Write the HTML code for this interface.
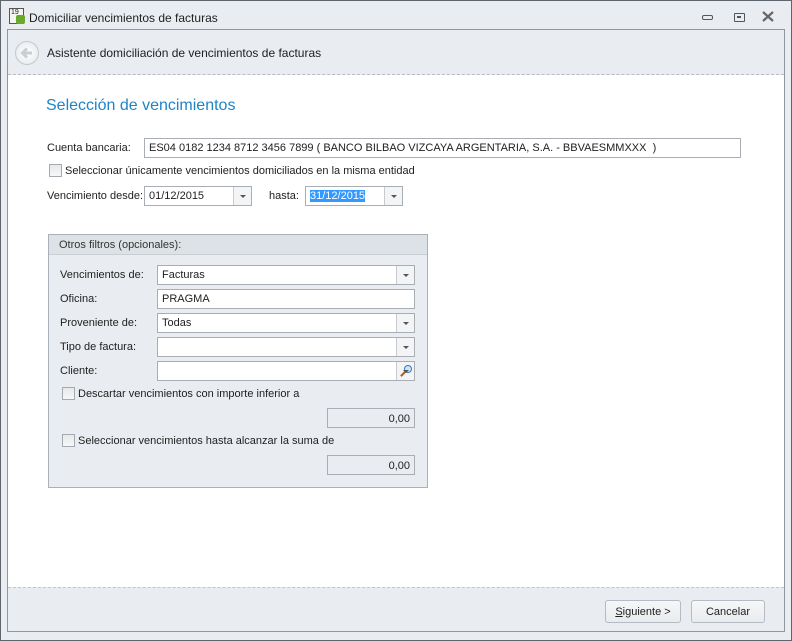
<!DOCTYPE html>
<html><head><meta charset="utf-8"><style>
*{box-sizing:border-box;margin:0;padding:0}
body{width:792px;height:641px;position:relative;background:#e9edf1;font-family:"Liberation Sans",sans-serif;font-size:11px;color:#1e1e1e;overflow:hidden}
.a{position:absolute}
.win{left:0;top:0;width:792px;height:641px;border:1px solid #5e656d;background:#e9edf1}
.frame{left:7px;top:29px;width:778px;height:603px;border:1px solid #8e969e;background:#fff}
.hdr{left:0;top:0;width:776px;height:45px;background:#e9edf1;border-bottom:1px dashed #b5bcc4}
.ftr{left:0;top:557px;width:776px;height:44px;background:#e9edf1;border-top:1px dashed #c0c6cc}
.inp{background:#fff;border:1px solid #a9aeb4;height:20px;padding:3px 0 0 4px;white-space:nowrap;overflow:hidden}
.dd{position:absolute;right:0;top:0;width:18px;height:18px;border-left:1px solid #c8ccd0;background:#f3f4f6}
.dd:after{content:"";position:absolute;left:6px;top:8px;border-left:3px solid transparent;border-right:3px solid transparent;border-top:3px solid #555}
.cb{width:13px;height:13px;border:1px solid #a5aab0;background:linear-gradient(#e6e8ea,#f6f7f8)}
.ro{background:#e9edf1;border:1px solid #a9aeb4;height:20px;text-align:right;padding:4px 4px 0 0}
.btn{height:23px;border:1px solid #b5bbc2;border-radius:3px;background:linear-gradient(#f6f7f8,#e8ebee);text-align:center;padding-top:5px}
</style></head><body>
<div class="a win"></div>
<div class="a" style="left:9px;top:8px;width:15px;height:16px;border:1px solid #555;background:#f4f4f0;font-size:7px;line-height:7px;padding-left:1px">19</div>
<div class="a" style="left:16px;top:15px;width:9px;height:9px;background:#6aa82e;border-radius:2px"></div>
<div class="a" style="left:29px;top:11px;font-size:12px">Domiciliar vencimientos de facturas</div>
<div class="a" style="left:702px;top:15px;width:11px;height:5px;border:1.5px solid #555;border-radius:2px"></div>
<div class="a" style="left:734px;top:13px;width:11px;height:9px;border:1.5px solid #555;border-radius:1px"><div style="margin:2px 0 0 2px;width:4px;height:2px;border:1px solid #555"></div></div>
<svg class="a" style="left:762px;top:11px" width="12" height="11"><path d="M1 1L11 10M11 1L1 10" stroke="#666" stroke-width="2.2" fill="none"/></svg>
<div class="a frame">
 <div class="a hdr">
  <div class="a" style="left:7px;top:11px;width:24px;height:24px;border-radius:50%;border:1px solid #c3c8ce;background:radial-gradient(#fff,#e2e6ea)"></div>
  <svg class="a" style="left:12px;top:16px" width="14" height="14"><path d="M12 7H3M7 2.5L2.5 7L7 11.5" stroke="#c9ced4" stroke-width="3" fill="none"/></svg>
  <div class="a" style="left:39px;top:16px;font-size:12px">Asistente domiciliación de vencimientos de facturas</div>
 </div>
 <div class="a" style="left:38px;top:67px;font-size:16px;color:#1e84c6">Selección de vencimientos</div>
 <div class="a" style="left:39px;top:112px">Cuenta bancaria:</div>
 <div class="a inp" style="left:136px;top:108px;width:597px">ES04 0182 1234 8712 3456 7899 ( BANCO BILBAO VIZCAYA ARGENTARIA, S.A. - BBVAESMMXXX &nbsp;)</div>
 <div class="a cb" style="left:41px;top:134px"></div>
 <div class="a" style="left:57px;top:135px">Seleccionar únicamente vencimientos domiciliados en la misma entidad</div>
 <div class="a" style="left:39px;top:160px">Vencimiento desde:</div>
 <div class="a inp" style="left:136px;top:156px;width:108px">01/12/2015<div class="dd"></div></div>
 <div class="a" style="left:261px;top:160px">hasta:</div>
 <div class="a inp" style="left:297px;top:156px;width:98px"><span style="background:#3399ff;color:#fff">31/12/2015</span><div class="dd"></div></div>
 <div class="a" style="left:40px;top:204px;width:380px;height:254px;border:1px solid #a9b0b8;background:#e9edf1">
  <div style="height:20px;background:#dde2e7;border-bottom:1px solid #c8ced4;padding:4px 0 0 10px;color:#333">Otros filtros (opcionales):</div>
  <div class="a" style="left:11px;top:34px">Vencimientos de:</div>
  <div class="a inp" style="left:108px;top:30px;width:258px">Facturas<div class="dd"></div></div>
  <div class="a" style="left:11px;top:58px">Oficina:</div>
  <div class="a inp" style="left:108px;top:54px;width:258px">PRAGMA</div>
  <div class="a" style="left:11px;top:82px">Proveniente de:</div>
  <div class="a inp" style="left:108px;top:78px;width:258px">Todas<div class="dd"></div></div>
  <div class="a" style="left:11px;top:106px">Tipo de factura:</div>
  <div class="a inp" style="left:108px;top:102px;width:258px"><div class="dd"></div></div>
  <div class="a" style="left:11px;top:130px">Cliente:</div>
  <div class="a inp" style="left:108px;top:126px;width:258px"><div class="dd" style="background:#f3f4f6"><div style="position:absolute;left:7px;top:3px;width:8px;height:8px;border-radius:50%;border:1.5px solid #3a7ac0;background:#cfe4f7"></div><div style="position:absolute;left:3px;top:11px;width:6px;height:2px;background:#b06020;transform:rotate(-45deg)"></div></div></div>
  <div class="a cb" style="left:13px;top:152px"></div>
  <div class="a" style="left:29px;top:153px">Descartar vencimientos con importe inferior a</div>
  <div class="a ro" style="left:278px;top:173px;width:88px">0,00</div>
  <div class="a cb" style="left:13px;top:199px"></div>
  <div class="a" style="left:29px;top:200px">Seleccionar vencimientos hasta alcanzar la suma de</div>
  <div class="a ro" style="left:278px;top:220px;width:88px">0,00</div>
 </div>
 <div class="a ftr">
  <div class="a btn" style="left:597px;top:12px;width:76px"><u>S</u>iguiente &gt;</div>
  <div class="a btn" style="left:683px;top:12px;width:74px">Cancelar</div>
 </div>
</div>
</body></html>
